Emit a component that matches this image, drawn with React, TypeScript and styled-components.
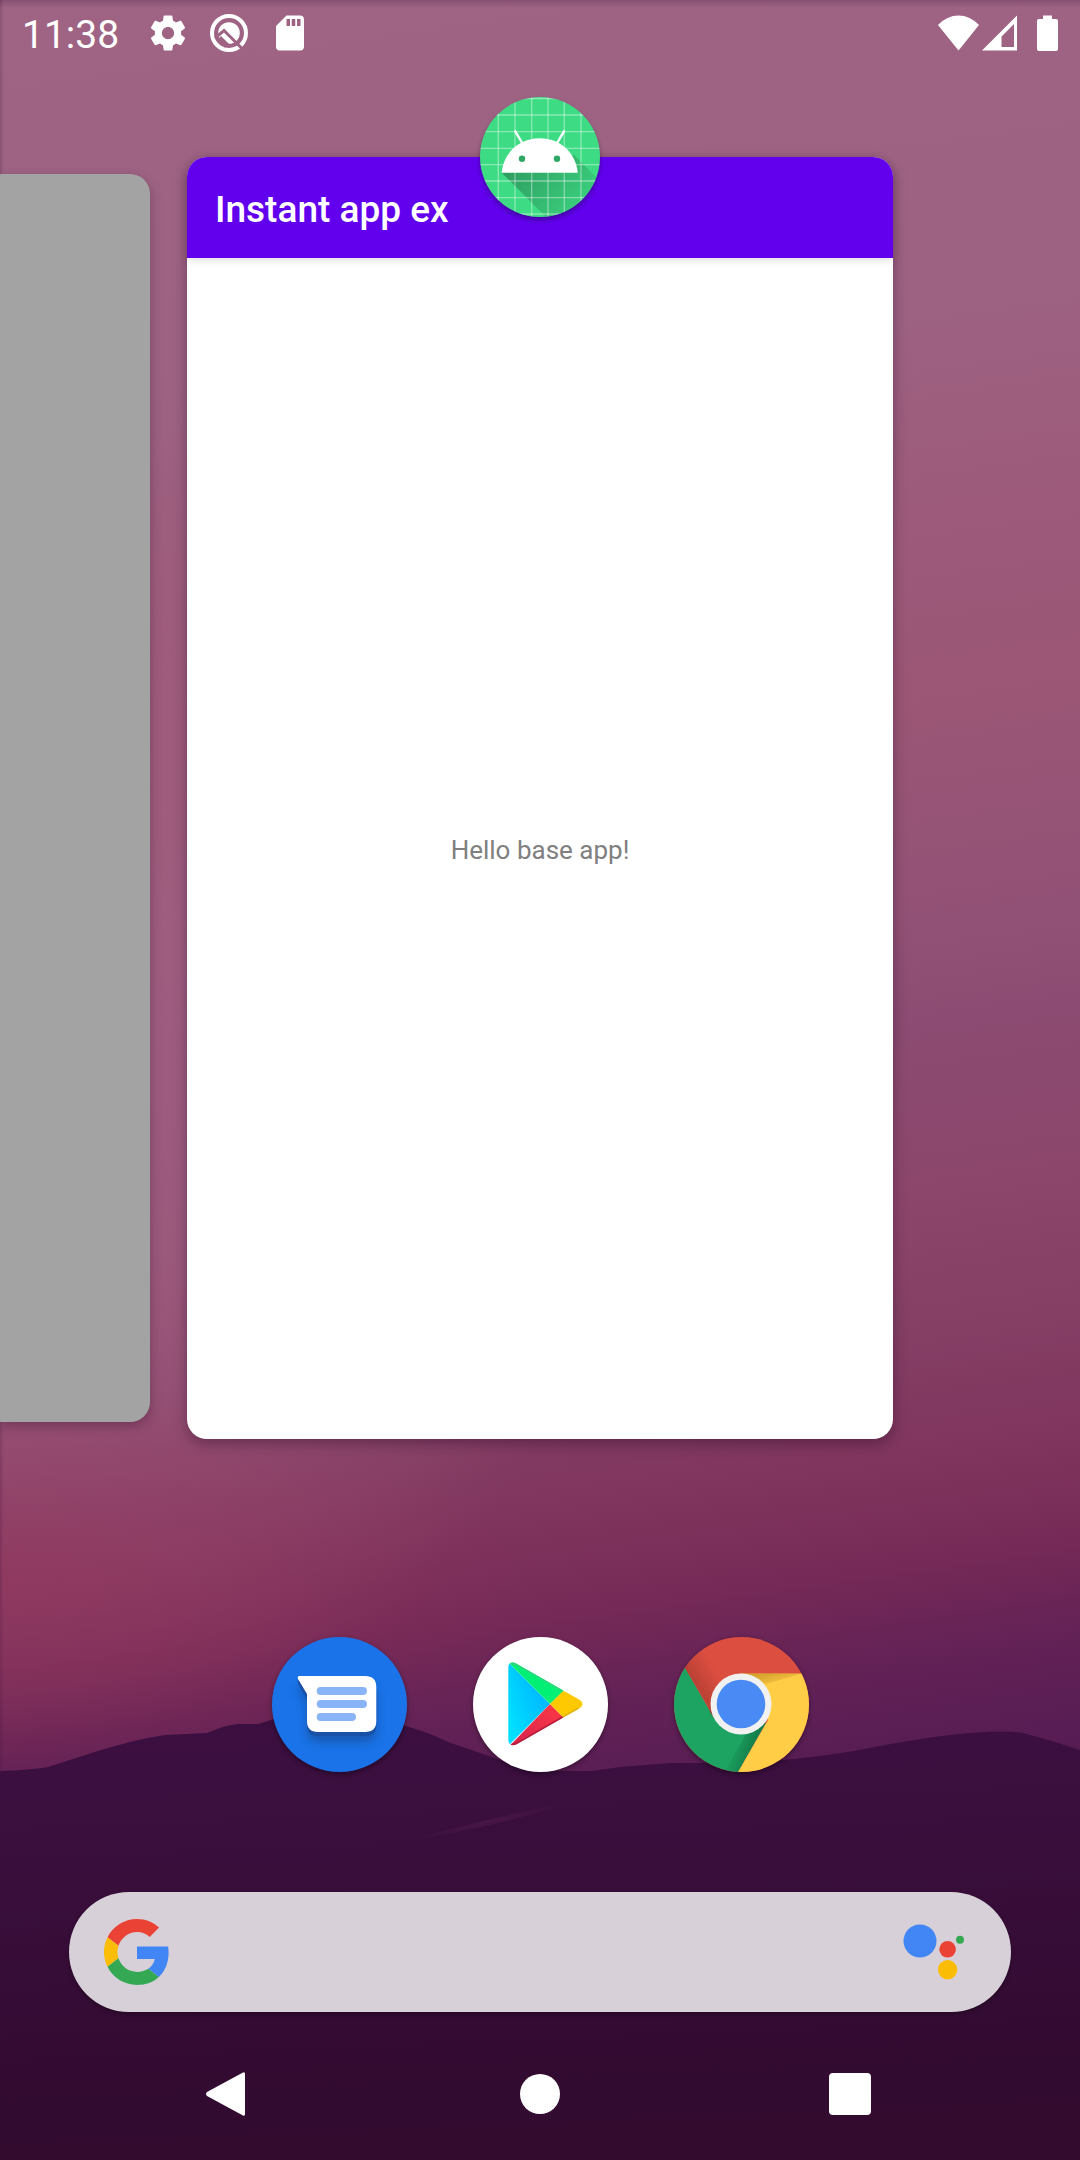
import React from 'react';
import styled, { createGlobalStyle } from 'styled-components';

const GlobalStyle = createGlobalStyle`
  *, *::before, *::after { box-sizing: border-box; }
  body { margin: 0; font-family: Roboto, "Liberation Sans", sans-serif; }
  h1, p { margin: 0; }
  svg { display: block; }
`;

const Screen = styled.div`
  position: relative;
  isolation: isolate;
  display: flex;
  flex-direction: column;
  min-height: 100vh;
  overflow: hidden;
  color: #fff;
`;

const Wallpaper = styled.div`
  position: absolute;
  inset: 0;
  z-index: -1;
  background:
    linear-gradient(180deg, rgba(60, 20, 60, 0.25), transparent 8px),
    linear-gradient(90deg, rgba(60, 20, 60, 0.22), transparent 4px),
    radial-gradient(ellipse 520px 200px at 0% 73%, rgba(150, 50, 88, 0.5), transparent),
    radial-gradient(ellipse 640px 640px at 0% 51%, rgba(163, 98, 132, 0.85), rgba(163, 98, 132, 0.6) 40%, transparent),
    linear-gradient(172deg,
      #9f6484 0%, #9d6282 18%, #9d5a7a 28%, #9b5675 36%, #935276 44%, #8c4b72 50%,
      #8c466b 57%, #853f65 63%, #7f345d 69%, #762a57 73%,
      #642256 77%, #581d54 81%, #521a50 84%);

  svg { width: 100%; height: 100%; }
`;

const StatusBar = styled.header`
  display: flex;
  align-items: center;
  justify-content: space-between;
  height: 66px;
  padding: 0 22px;
`;

const StatusGroup = styled.div<{ $gap: number }>`
  display: flex;
  align-items: center;
  gap: ${p => p.$gap}px;
`;

const Clock = styled.time`
  margin-right: 9px;
  padding-top: 3px;
  font-size: 39px;
  line-height: 48px;
`;

const Recents = styled.main`
  flex: 1;
  display: grid;
  grid-template-columns: minmax(0, 1fr) minmax(0, 706px) minmax(0, 1fr);
  column-gap: 37px;
  padding-top: 91px;
`;

const PreviousTask = styled.button`
  margin: 17px 0;
  padding: 0;
  border: 0;
  border-radius: 0 20px 20px 0;
  background: #a3a3a3;
  box-shadow: 0 4px 12px rgba(30, 0, 30, 0.3);
`;

const Task = styled.article`
  position: relative;
  display: flex;
  flex-direction: column;
  border-radius: 20px;
  background: #fff;
  box-shadow: 0 5px 14px rgba(30, 0, 30, 0.35);
`;

const TaskIcon = styled.div`
  position: absolute;
  top: -60px;
  left: 50%;
  width: 120px;
  height: 120px;
  margin-left: -60px;
  border-radius: 50%;
  box-shadow: 0 3px 5px rgba(0, 0, 0, 0.35);
`;

const TaskBar = styled.div`
  display: flex;
  align-items: center;
  height: 101px;
  padding: 4px 28px 0;
  border-radius: 20px 20px 0 0;
  background: #6200ee;
  box-shadow: 0 2px 8px rgba(0, 0, 0, 0.14);
`;

const TaskTitle = styled.h1`
  font-size: 37px;
  line-height: 44px;
  font-weight: 500;
`;

const TaskBody = styled.div`
  flex: 1;
  display: grid;
  place-items: center;
  padding-top: 2px;
  color: #808080;
  font-size: 26px;
  line-height: 32px;
`;

const Dock = styled.nav`
  display: flex;
  justify-content: center;
  gap: 66px;
  margin: 198px 0 120px;
`;

const AppButton = styled.button`
  width: 135px;
  height: 135px;
  padding: 0;
  border: 0;
  border-radius: 50%;
  overflow: hidden;
  background: none;
  box-shadow: 0 2px 5px rgba(0, 0, 0, 0.4);
`;

const SearchBar = styled.form`
  display: flex;
  align-items: center;
  height: 120px;
  margin: 0 69px 16px;
  padding: 0 47px 0 35px;
  border-radius: 60px;
  background: #d8d0d8;
  box-shadow: 0 2px 4px rgba(0, 0, 0, 0.3);
`;

const SearchInput = styled.input`
  flex: 1;
  min-width: 0;
  height: 80px;
  padding: 0 24px;
  border: 0;
  outline: 0;
  background: none;
  color: #333;
  font: 36px Roboto, sans-serif;
`;

const PlainButton = styled.button`
  padding: 0;
  border: 0;
  background: none;
`;

const NavBar = styled.nav`
  display: flex;
  justify-content: center;
  height: 132px;
`;

const NavButton = styled(PlainButton)`
  display: grid;
  place-items: center;
  width: 310px;
`;

const Mountains = () => (
  <svg viewBox="0 0 1080 2160" preserveAspectRatio="none" aria-hidden="true">
    <defs>
      <linearGradient id="hill" x1="0" y1="0" x2="0.1" y2="1">
        <stop offset="0" stopColor="#3c0f41" />
        <stop offset="0.4" stopColor="#390e3b" />
        <stop offset="0.7" stopColor="#340c34" />
        <stop offset="1" stopColor="#320b2f" />
      </linearGradient>
      <linearGradient id="ridge" x1="0" y1="1" x2="1" y2="0">
        <stop offset="0" stopColor="#5a2056" stopOpacity="0" />
        <stop offset="0.5" stopColor="#5a2056" stopOpacity="0.4" />
        <stop offset="1" stopColor="#5a2056" stopOpacity="0" />
      </linearGradient>
    </defs>
    <path fill="url(#hill)" d="M0 1771 Q30 1770 48 1767 L76 1758 Q130 1740 165 1735 L207 1733 Q225 1725 238 1724 L258 1724 Q300 1708 350 1712 Q385 1717 406 1726 Q430 1733 448 1742 L492 1757 Q525 1771 545 1771 L592 1771 L620 1767 L671 1763 L740 1763 Q800 1760 854 1751 Q920 1738 950 1735 Q1000 1729 1023 1733 Q1050 1740 1080 1750 V2160 H0Z" />
    <path fill="url(#ridge)" d="M405 1841 Q500 1815 572 1802 Q500 1826 405 1841Z" />
  </svg>
);

const GearIcon = () => (
  <svg width="42" height="42" viewBox="0 0 24 24" fill="#fff">
    <path d="M19.43 12.98c.04-.32.07-.64.07-.98s-.03-.66-.07-.98l2.11-1.65c.19-.15.24-.42.12-.64l-2-3.46c-.12-.22-.39-.3-.61-.22l-2.49 1c-.52-.4-1.08-.73-1.69-.98l-.38-2.65C14.46 2.18 14.25 2 14 2h-4c-.25 0-.46.18-.49.42l-.38 2.65c-.61.25-1.17.59-1.69.98l-2.49-1c-.23-.09-.49 0-.61.22l-2 3.46c-.13.22-.07.49.12.64l2.11 1.65c-.04.32-.07.65-.07.98s.03.66.07.98l-2.11 1.65c-.19.15-.24.42-.12.64l2 3.46c.12.22.39.3.61.22l2.49-1c.52.4 1.08.73 1.69.98l.38 2.65c.03.24.24.42.49.42h4c.25 0 .46-.18.49-.42l.38-2.65c.61-.25 1.17-.59 1.69-.98l2.49 1c.23.09.49 0 .61-.22l2-3.46c.12-.22.07-.49-.12-.64l-2.11-1.65zM12 15.5c-1.93 0-3.5-1.57-3.5-3.5s1.57-3.5 3.5-3.5 3.5 1.57 3.5 3.5-1.57 3.5-3.5 3.5z" />
  </svg>
);

const TraceIcon = () => (
  <svg width="42" height="42" viewBox="0 0 42 42">
    <mask id="trace">
      <rect width="42" height="42" fill="#000" />
      <circle cx="21" cy="21" r="17" fill="none" stroke="#fff" strokeWidth="4" />
      <circle cx="21" cy="21" r="10.8" fill="#fff" />
      <path d="M7 26 L16 18.5 L36 38.5" fill="none" stroke="#000" strokeWidth="3" />
      <path d="M10 27 L13 24 L21 32 L17 36Z" fill="#000" />
    </mask>
    <rect width="42" height="42" fill="#fff" mask="url(#trace)" />
  </svg>
);

const SdCardIcon = () => (
  <svg width="42" height="42" viewBox="0 0 24 24" fill="#fff">
    <path d="M18 2h-8L4.02 8 4 20c0 1.1.9 2 2 2h12c1.1 0 2-.9 2-2V4c0-1.1-.9-2-2-2zm-6 6h-2V4h2v4zm3 0h-2V4h2v4zm3 0h-2V4h2v4z" />
  </svg>
);

const SignalIcons = () => (
  <svg width="120" height="37" viewBox="0 0 120 37" fill="#fff" role="img" aria-label="Wi-Fi, mobile signal, battery">
    <path d="M0 10 Q9 0.500 20.500 0.500 T41 10 L20.500 35.500Z" />
    <path fillRule="evenodd" d="M79 0.500 V35.500 H44Z M76 9 L63.500 21.500 V32 H76Z" />
    <path d="M105 0.500 H114 V4 H118 Q120 4 120 6 V34 Q120 36 118 36 H101 Q99 36 99 34 V6 Q99 4 101 4 H105Z" />
  </svg>
);

const AndroidIcon = () => (
  <svg width="120" height="120" viewBox="0 0 120 120" aria-hidden="true">
    <defs>
      <clipPath id="disc"><circle cx="60" cy="60" r="60" /></clipPath>
      <linearGradient id="cast" gradientUnits="userSpaceOnUse" x1="40" y1="60" x2="104" y2="116">
        <stop offset="0" stopColor="#20603f" stopOpacity="0.5" />
        <stop offset="1" stopColor="#20603f" stopOpacity="0.08" />
      </linearGradient>
    </defs>
    <g clipPath="url(#disc)">
      <rect width="120" height="120" fill="#3ddc84" />
      <path d="M21.700 75.700 L66 120 H120 V84 L94 58Z" fill="url(#cast)" />
      <g stroke="#fff" strokeOpacity="0.4" strokeWidth="1.300">
        {[18.3, 35, 51.7, 68, 84.3, 101].map(v => <path key={v} d={`M${v} 0V120`} />)}
        {[1.5, 18, 34.7, 51.3, 67.7, 84, 100.7, 117].map(v => <path key={v} d={`M0 ${v}H120`} />)}
      </g>
      <path d="M21.700 75.700 C23.500 56 39 41.300 59.700 41.300 S96 56 97.700 75.700Z" fill="#fff" />
      <path d="M35.300 34.300 L42.500 46.500 M84 34.300 L76.800 46.500" stroke="#fff" strokeWidth="2.400" strokeLinecap="round" />
      <circle cx="42" cy="61.7" r="3.2" fill="#2fa866" />
      <circle cx="77" cy="61.7" r="3.2" fill="#2fa866" />
    </g>
  </svg>
);

const MessagesIcon = () => {
  const bubble = 'M27.500 39 H93 Q104.300 39 104.300 50 V84 Q104.300 95 93 95 H46 Q35 95 35 84 V57 L26 42 Q25 39 27.500 39Z';
  return (
    <svg width="135" height="135" viewBox="0 0 135 135" aria-hidden="true">
      <defs><filter id="soft" x="-30%" y="-30%" width="160%" height="180%"><feGaussianBlur stdDeviation="5" /></filter></defs>
      <rect width="135" height="135" fill="#1a73e8" />
      <path d={bubble} fill="#123f80" opacity="0.5" transform="translate(0 10)" filter="url(#soft)" />
      <path d={bubble} fill="#1851a6" transform="translate(0 4)" />
      <path d="M26 42 V47 L35 62 V57Z" fill="#1851a6" />
      <path d={bubble} fill="#fff" />
      <g stroke="#8ab4f8" strokeWidth="8" strokeLinecap="round">
        <path d="M48.700 54 H91 M48.700 67 H91 M48.700 80 H80" />
      </g>
    </svg>
  );
};

const PlayIcon = () => (
  <svg width="135" height="135" viewBox="0 0 135 135" aria-hidden="true">
    <defs>
      <clipPath id="tri"><path d="M35.300 30 Q35.300 25.600 40 25.600 Q42 25.800 44 27 L106 62.500 Q109.500 64.500 109.500 67 Q109.500 69.500 106 71.500 L44 107 Q42 108.200 39 108.200 Q35.300 107 35.300 103Z" /></clipPath>
      <linearGradient id="blue" x1="1" y1="0" x2="0" y2="0.7"><stop offset="0" stopColor="#00a9ff" /><stop offset="1" stopColor="#00e0ff" /></linearGradient>
      <linearGradient id="red" x1="1" y1="0" x2="0" y2="1"><stop offset="0" stopColor="#ff3a44" /><stop offset="1" stopColor="#d5204e" /></linearGradient>
    </defs>
    <rect width="135" height="135" fill="#fff" />
    <g clipPath="url(#tri)">
      <path d="M35 25 L77 67 L35 109Z" fill="url(#blue)" />
      <path d="M35 25 L77 67 L91 53.500 V25Z" fill="#00f076" />
      <path d="M37 108.500 L77 67 L90.500 80.500 V109Z" fill="url(#red)" />
      <path d="M77 67 L90 54 L112 67 L90 80Z M90 54 L112 60 V74 L90 80Z" fill="#ffc900" />
      <path d="M38 25.500 L44 27 L90 53.500" stroke="#33d47f" strokeWidth="3" fill="none" />
      <path d="M38 108.500 L44 107 L90 80.500" stroke="#b51f3c" strokeWidth="3" fill="none" />
      <path d="M90 80.500 L106 71.500" stroke="#d9ad0c" strokeWidth="2.500" />
    </g>
  </svg>
);

const ChromeIcon = () => (
  <svg width="135" height="135" viewBox="0 0 135 135" aria-hidden="true">
    <defs>
      <linearGradient id="rs" gradientUnits="userSpaceOnUse" x1="19" y1="49" x2="42" y2="35"><stop offset="0" stopColor="#7d2a20" stopOpacity="0.4" /><stop offset="1" stopColor="#7d2a20" stopOpacity="0" /></linearGradient>
      <linearGradient id="gs" gradientUnits="userSpaceOnUse" x1="84" y1="108" x2="60" y2="100"><stop offset="0" stopColor="#0a5c35" stopOpacity="0.6" /><stop offset="1" stopColor="#0a5c35" stopOpacity="0" /></linearGradient>
      <linearGradient id="ys" gradientUnits="userSpaceOnUse" x1="90" y1="36" x2="94" y2="52"><stop offset="0" stopColor="#a97616" stopOpacity="0.5" /><stop offset="1" stopColor="#a97616" stopOpacity="0.05" /></linearGradient>
    </defs>
    <rect width="135" height="135" fill="#db4e40" />
    <path d="M11 31 L40 81 L67 97 L92 86 L64 135 H0 V12Z" fill="#1da462" />
    <path d="M67 36.500 H135 V135 H64 L94 83Z" fill="#ffcd46" />
    <path d="M11 31 L34 69 L37 79 L45 46 L40 0 H20Z" fill="url(#rs)" />
    <path d="M92 85 L64 135 H50 L72 97Z" fill="url(#gs)" />
    <path d="M67 36.500 H128 L92 47Z" fill="url(#ys)" />
    <circle cx="67" cy="67" r="30.500" fill="#f1f1f1" />
    <circle cx="67" cy="67" r="24.300" fill="#4a8af4" />
  </svg>
);

const GoogleIcon = () => (
  <svg width="66" height="66" viewBox="0 0 48 48" aria-hidden="true">
    <path fill="#ea4335" d="M24 9.500c3.540 0 6.710 1.220 9.210 3.600l6.850-6.850C35.900 2.380 30.470 0 24 0 14.620 0 6.510 5.380 2.560 13.220l7.980 6.190C12.430 13.720 17.740 9.500 24 9.500z" />
    <path fill="#4285f4" d="M46.980 24.550c0-1.570-.150-3.090-.380-4.550H24v9.020h12.940c-.580 2.960-2.260 5.480-4.780 7.180l7.730 6c4.510-4.180 7.090-10.360 7.090-17.650z" />
    <path fill="#fbbc05" d="M10.530 28.590c-.480-1.450-.760-2.990-.760-4.590s.270-3.140.760-4.590l-7.980-6.190C.920 16.460 0 20.120 0 24c0 3.880.920 7.540 2.560 10.780l7.970-6.190z" />
    <path fill="#34a853" d="M24 48c6.480 0 11.930-2.130 15.890-5.810l-7.730-6c-2.150 1.450-4.920 2.300-8.160 2.300-6.260 0-11.570-4.220-13.470-9.910l-7.980 6.190C6.510 42.620 14.620 48 24 48z" />
  </svg>
);

const AssistantIcon = () => (
  <svg width="61" height="56" viewBox="0 0 61 56" aria-hidden="true">
    <circle cx="17" cy="17" r="16.500" fill="#4285f4" />
    <circle cx="44.600" cy="25.300" r="8.300" fill="#ea4335" />
    <circle cx="57" cy="15.700" r="4" fill="#34a853" />
    <circle cx="44.600" cy="45.700" r="9.700" fill="#fbbc05" />
  </svg>
);

export default function App() {
  return (
    <>
      <GlobalStyle />
      <Screen>
        <Wallpaper><Mountains /></Wallpaper>

        <StatusBar>
          <StatusGroup $gap={19}>
            <Clock>11:38</Clock>
            <GearIcon />
            <TraceIcon />
            <SdCardIcon />
          </StatusGroup>
          <SignalIcons />
        </StatusBar>

        <Recents>
          <PreviousTask type="button" aria-label="Previous app" />
          <Task>
            <TaskBar><TaskTitle>Instant app ex</TaskTitle></TaskBar>
            <TaskBody><p>Hello base app!</p></TaskBody>
            <TaskIcon><AndroidIcon /></TaskIcon>
          </Task>
        </Recents>

        <Dock>
          <AppButton type="button" aria-label="Messages"><MessagesIcon /></AppButton>
          <AppButton type="button" aria-label="Play Store"><PlayIcon /></AppButton>
          <AppButton type="button" aria-label="Chrome"><ChromeIcon /></AppButton>
        </Dock>

        <SearchBar role="search">
          <PlainButton type="submit" aria-label="Google Search"><GoogleIcon /></PlainButton>
          <SearchInput type="text" aria-label="Search" />
          <PlainButton type="button" aria-label="Assistant"><AssistantIcon /></PlainButton>
        </SearchBar>

        <NavBar>
          <NavButton type="button" aria-label="Back">
            <svg width="48" height="48" viewBox="0 0 48 48" fill="#fff"><path d="M37 2.500 Q39 1.500 39 4 V44 Q39 46.500 37 45.500 L1 26 Q-1 24 1 22Z" /></svg>
          </NavButton>
          <NavButton type="button" aria-label="Home">
            <svg width="42" height="42" viewBox="0 0 42 42" fill="#fff"><circle cx="21" cy="21" r="20" /></svg>
          </NavButton>
          <NavButton type="button" aria-label="Overview">
            <svg width="42" height="42" viewBox="0 0 42 42" fill="#fff"><rect width="42" height="42" rx="4" /></svg>
          </NavButton>
        </NavBar>
      </Screen>
    </>
  );
}
